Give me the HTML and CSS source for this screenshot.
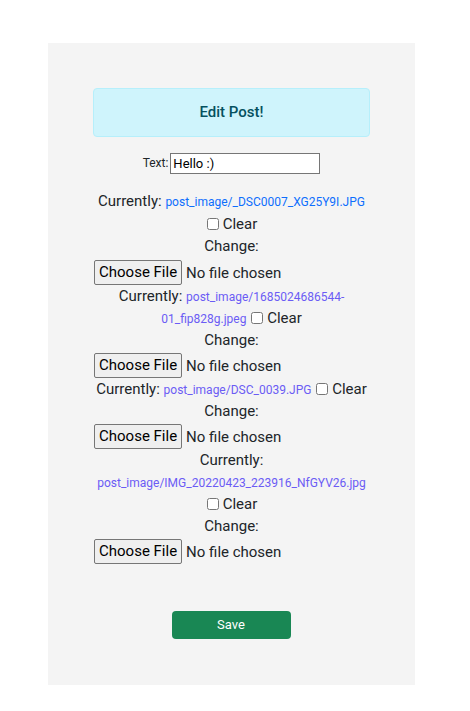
FILE: index.html
```html
<!DOCTYPE html>
<html lang="en">
<head>
<meta charset="utf-8">
<title>Edit Post</title>
<link rel="stylesheet" href="styles.css">
</head>
<body>
<main class="card">
  <div class="alert">Edit Post!</div>
  <form class="form">
    <p class="text-row"><label class="small-label" for="t">Text:</label> <input id="t" class="text-input" type="text" value="Hello :)"></p>
    <div class="field">Currently: <a class="link" href="#">post_image/_DSC0007_XG25Y9I.JPG</a> <input type="checkbox" id="c1"><label for="c1">Clear</label><br>Change: <input class="file" type="file"></div>
    <div class="field">Currently: <a class="link visited" href="#">post_image/1685024686544-01_fip828g.jpeg</a> <input type="checkbox" id="c2"><label for="c2">Clear</label><br>Change: <input class="file" type="file"></div>
    <div class="field">Currently: <a class="link visited" href="#">post_image/DSC_0039.JPG</a> <input type="checkbox" id="c3"><label for="c3">Clear</label><br>Change: <input class="file" type="file"></div>
    <div class="field">Currently: <a class="link visited" href="#">post_image/IMG_20220423_223916_NfGYV26.jpg</a> <input type="checkbox" id="c4"><label for="c4">Clear</label><br>Change: <input class="file" type="file"></div>
    <div class="actions"><button class="save" type="button">Save</button></div>
  </form>
</main>
</body>
</html>
```
FILE: styles.css
```css
html, body {
  margin: 0;
  background: #ffffff;
}
body {
  font-family: Roboto, "Liberation Sans", sans-serif;
  color: #212529;
  font-size: 15px;
  line-height: 1.5;
}
.card {
  box-sizing: border-box;
  width: 367px;
  margin: 43px 0 0 48px;
  padding: 45px 45px 46px;
  background: #f4f4f4;
}
.alert {
  box-sizing: border-box;
  height: 49px;
  border: 1px solid #b6effb;
  border-radius: 4px;
  background: #cff4fc;
  color: #055160;
  font-size: 15px;
  font-weight: 500;
  line-height: 47px;
  text-align: center;
  margin-bottom: 16px;
}
.form {
  text-align: center;
}
.text-row {
  margin: 0 0 16px;
  height: 21px;
  line-height: 21px;
  display: flex;
  justify-content: center;
  align-items: center;
  gap: 2px;
}
.small-label {
  font-size: 12px;
}
.text-input {
  box-sizing: border-box;
  width: 150px;
  height: 21px;
  border: 1px solid #767676;
  border-radius: 0;
  padding: 1px 2px;
  font-family: Roboto, sans-serif;
  font-size: 13px;
  color: #000;
  background: #fff;
  margin: 0;
}
.field {
  line-height: 22px;
}
.field:first-of-type {
  line-height: 22.6px;
}
.link {
  font-size: 12px;
  line-height: 1;
  color: #0d6efd;
  text-decoration: none;
}
.link.visited {
  color: #6b5cf5;
}
input[type="checkbox"] {
  width: 12px;
  height: 12px;
  margin: 0 4px 0 1px;
  vertical-align: -1px;
}
.file {
  display: block;
  box-sizing: border-box;
  width: 100%;
  height: 25px;
  margin: 2px 0 0;
  padding: 0;
  font-family: Roboto, sans-serif;
  font-size: 15px;
  line-height: 25px;
  color: #212529;
  text-align: left;
}
.file::file-selector-button {
  box-sizing: border-box;
  height: 25px;
  margin: 0 4px 0 1px;
  padding: 0 4px;
  border: 1px solid #767676;
  border-radius: 2px;
  background: #efefef;
  color: #000;
  font-family: Roboto, sans-serif;
  font-size: 15px;
}
.actions {
  margin-top: 47px;
  display: flex;
  justify-content: center;
}
.save {
  width: 119px;
  height: 28px;
  border: none;
  border-radius: 4px;
  background: #198754;
  color: #fff;
  font-family: Roboto, sans-serif;
  font-size: 13px;
  padding: 0;
  margin-right: 1px;
}
```
